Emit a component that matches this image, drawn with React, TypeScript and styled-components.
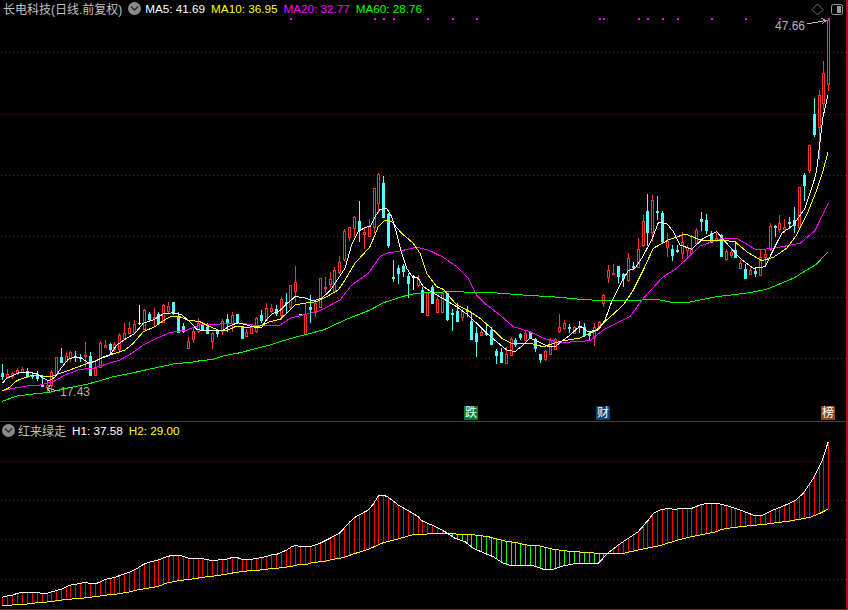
import React from "react";
import styled, { createGlobalStyle } from "styled-components";

type Kind = "r" | "c" | "w";
type Row = [number, number, number, number, number, Kind];
type Pt = [number, number];

const Global = createGlobalStyle`
  html, body { margin: 0; padding: 0; background: #000; }
  #root { width: 848px; height: 610px; }
`;

const Screen = styled.div`
  width: 848px;
  height: 610px;
  box-sizing: border-box;
  background: #000;
  border-right: 2px solid #b00c0c;
  border-bottom: 1px solid #b00c0c;
  display: flex;
  flex-direction: column;
  overflow: hidden;
  font-family: "Liberation Sans", "Noto Sans CJK SC", sans-serif;
  font-size: 12px;
`;
const MainPane = styled.section`
  position: relative;
  height: 422px;
  flex: none;
  box-sizing: border-box;
  border-bottom: 1px solid #b00c0c;
`;
const IndicatorPane = styled.section`
  position: relative;
  flex: 1;
  min-height: 0;
`;
const ChartSvg = styled.svg`
  display: block;
  width: 846px;
  height: 100%;
`;
const Legend = styled.div<{ $left: number; $top: number }>`
  position: absolute;
  left: ${(p) => p.$left}px;
  top: ${(p) => p.$top}px;
  display: flex;
  align-items: center;
  gap: 6px;
  height: 17px;
  white-space: nowrap;
`;
const Title = styled.span`
  color: #c0c0c0;
`;
const Value = styled.span<{ $color: string }>`
  color: ${(p) => p.$color};
  font-size: 11.7px;
`;
const MenuDot = styled.span<{ $trail: number }>`
  width: 13px;
  height: 13px;
  margin-right: ${(p) => p.$trail}px;
  border-radius: 50%;
  background: #8a8a8a;
  display: inline-flex;
  align-items: center;
  justify-content: center;
  flex: none;
`;
const Tools = styled.div`
  position: absolute;
  right: 3px;
  top: 3px;
  display: flex;
  align-items: center;
  gap: 7px;
`;
const PriceTag = styled.span<{ $x: number; $y: number }>`
  position: absolute;
  left: ${(p) => p.$x}px;
  top: ${(p) => p.$y}px;
  color: #b4b4b4;
  line-height: 14px;
`;
const Badge = styled.span<{ $x: number; $bg: string }>`
  position: absolute;
  left: ${(p) => p.$x}px;
  top: 406px;
  width: 14px;
  height: 14px;
  line-height: 14px;
  text-align: center;
  color: #fff;
  background: ${(p) => p.$bg};
`;

const at = (dx: number, dy: number, rows: Row[]): Row[] =>
  rows.map(([x, h, t, b, l, k]) => [Math.floor(dx + x / 3), dy + h / 3, dy + t / 3, dy + b / 3, dy + l / 3, k]);
const pts = (dx: number, dy: number, list: Pt[]): Pt[] => list.map(([x, y]) => [dx + x / 3, dy + y / 3]);

const candles: Row[] = [
  ...at(0, 290, [
    [7,222,250,258,270,"c"],[22,238,252,262,268,"r"],[37,245,250,258,268,"r"],[52,235,240,248,255,"r"],[67,232,238,246,250,"r"],
    [82,235,242,258,265,"c"],[97,250,255,258,268,"c"],[112,242,252,265,272,"c"],[127,258,283,287,290,"c"],[142,270,285,290,305,"r"],
    [154,240,245,285,305,"r"],[169,200,202,252,255,"r"],[184,175,202,216,220,"c"],[199,185,198,212,215,"r"],[211,183,186,205,215,"r"],
    [226,183,198,202,215,"c"],[241,192,200,203,215,"c"],[256,157,196,198,230,"r"],[271,185,198,255,258,"c"],[286,217,233,255,255,"r"],
    [301,152,160,232,235,"r"],[316,150,165,170,172,"r"],[331,158,162,178,190,"c"],[343,155,163,178,185,"r"],[358,128,135,178,190,"r"],
    [373,98,130,145,150,"r"],[388,95,115,130,132,"r"],[403,90,102,125,132,"r"],[418,45,100,102,105,"w"],[433,58,60,118,120,"r"],
    [448,65,72,88,92,"c"],[463,55,80,85,110,"r"],[475,65,72,100,105,"c"],[490,42,45,95,98,"r"],[505,36,48,62,70,"r"],
    [520,36,36,70,75,"c"],[535,65,82,125,128,"c"],[550,98,108,122,128,"c"],[565,142,153,175,178,"r"],[580,112,124,148,160,"r"],
    [595,85,100,124,128,"r"],[607,95,105,118,122,"c"],[622,100,112,130,132,"c"],[637,125,130,152,178,"r"],[652,118,124,128,140,"c"],
    [667,88,92,124,136,"r"],[682,72,88,98,125,"c"],[697,65,75,98,125,"r"],[712,72,72,100,102,"c"],[727,108,112,145,148,"c"],
    [740,118,125,137,140,"r"],[755,105,112,130,130,"r"],[770,82,85,122,130,"r"],[785,60,75,90,100,"c"],[800,40,55,90,92,"r"],
    [815,42,55,62,70,"r"],[830,45,58,70,78,"c"],
  ]),
  ...at(280, 170, [
    [3,382,388,435,450,"r"],[18,368,395,400,430,"c"],[32,345,345,412,420,"r"],[47,288,336,362,395,"r"],[60,432,432,434,434,"w"],
    [76,400,432,492,495,"r"],[91,375,412,416,460,"c"],[107,395,398,426,440,"r"],[121,325,325,410,412,"r"],[136,322,350,352,368,"r"],
    [151,305,328,342,355,"r"],[163,292,300,362,365,"r"],[178,258,276,306,312,"r"],[193,178,184,268,272,"r"],[208,170,172,200,212,"r"],
    [223,138,140,175,200,"r"],[238,93,153,180,215,"c"],[253,175,186,192,238,"r"],[268,148,168,198,200,"r"],[283,55,55,172,190,"r"],
    [295,10,12,98,130,"r"],[310,18,40,140,140,"c"],[325,130,133,225,235,"c"],[340,270,320,322,335,"c"],[355,285,294,308,342,"c"],
    [370,282,288,302,320,"c"],[385,310,318,338,385,"c"],[400,315,320,322,360,"w"],[415,315,328,345,352,"r"],[428,352,360,425,430,"c"],
    [443,368,368,434,436,"r"],[458,345,350,398,400,"c"],[473,385,388,425,426,"r"],[488,370,370,425,426,"r"],[503,368,370,446,452,"c"],
    [518,418,428,430,482,"c"],[533,398,424,452,454,"c"],[547,418,424,440,452,"r"],[562,408,420,424,440,"c"],[575,428,452,506,508,"c"],
    [590,470,490,512,560,"c"],[605,472,486,494,496,"r"],[620,465,488,492,498,"c"],[635,470,480,522,525,"c"],[650,538,542,556,582,"c"],
    [665,535,546,575,576,"c"],[680,530,552,578,580,"r"],[695,502,508,556,558,"r"],[707,505,510,522,530,"c"],[722,488,492,502,510,"c"],
    [737,484,490,510,512,"r"],[752,485,487,502,504,"c"],[767,505,508,535,545,"c"],[782,552,552,568,578,"c"],[797,540,544,566,572,"r"],
    [812,505,510,552,554,"r"],[827,505,508,536,540,"r"],[838,432,470,484,490,"r"],
  ]),
  ...at(560, 170, [
    [13,450,458,474,480,"r"],[28,462,470,474,490,"c"],[43,468,470,490,492,"r"],[58,452,468,470,490,"c"],[73,458,470,496,502,"c"],
    [88,484,490,494,510,"c"],[103,458,470,500,528,"r"],[118,452,456,470,475,"r"],[130,372,374,400,412,"r"],[145,285,300,320,340,"r"],
    [160,282,308,312,316,"r"],[175,288,288,318,338,"c"],[190,310,312,325,350,"c"],[205,250,264,330,335,"r"],[220,275,288,290,300,"c"],
    [235,205,236,290,295,"r"],[250,135,154,226,230,"r"],[262,72,124,186,228,"c"],[277,75,90,186,215,"r"],[292,78,122,126,150,"c"],
    [307,122,128,214,222,"c"],[322,190,214,232,260,"r"],[337,225,238,256,272,"c"],[352,225,240,244,250,"c"],[367,185,216,248,268,"r"],
    [382,225,232,240,268,"r"],[395,195,236,248,250,"r"],[410,175,180,218,222,"r"],[425,126,148,152,182,"c"],[440,132,150,180,192,"c"],
    [455,182,190,216,220,"c"],[470,184,204,210,215,"r"],[485,192,196,258,260,"c"],[500,238,242,268,272,"r"],[515,238,246,256,265,"r"],
    [527,218,240,260,262,"c"],[542,270,280,294,298,"r"],[557,282,296,324,324,"c"],[572,294,300,312,316,"r"],[587,292,304,308,320,"c"],
    [602,240,262,314,316,"r"],[617,240,252,260,292,"r"],[632,160,168,238,242,"r"],[647,165,168,170,202,"c"],[658,135,160,178,190,"r"],
    [673,148,172,178,190,"r"],[688,142,156,158,178,"c"],[703,112,150,164,188,"c"],[718,52,52,172,178,"r"],[733,10,16,46,92,"c"],
  ]),
  [809,145,145,170,173,"r"],[814,98,114,134,137,"c"],[819,90,95,127,160,"r"],[823,61,73,103,110,"r"],[828,20,20,84,91,"r"],
];

const ma5: Pt[] = [
  ...pts(0,290,[[7,280],[20,265],[35,258],[60,247],[85,248],[110,250],[130,265],[145,272],[165,262],[185,232],[205,208],[225,200],[245,205],[265,218],[285,215],[305,205],[330,195],[350,165],[380,145],[405,130],[430,100],[460,90],[490,72],[520,68],[545,75],[570,95],[590,118],[610,122],[640,122],[670,120],[695,105],[715,98],[740,105],[765,112],[785,112],[800,88],[815,72],[840,62]]),
  ...pts(280,170,[[20,402],[45,380],[70,382],[100,392],[125,385],[150,362],[175,325],[195,295],[215,225],[235,185],[255,172],[270,170],[285,140],[300,118],[320,115],[335,140],[350,190],[365,250],[380,295],[395,318],[415,325],[430,350],[470,375],[500,392],[530,410],[560,432],[590,460],[620,490],[650,515],[680,540],[705,545],[730,525],[750,505],[775,515],[800,528],[825,530]]),
  ...pts(560,170,[[0,518],[30,495],[60,468],[85,485],[115,480],[135,450],[155,395],[185,335],[205,302],[225,295],[245,265],[275,210],[295,158],[320,160],[340,185],[360,225],[395,238],[430,205],[470,185],[500,220],[540,265],[580,295],[615,290],[640,240],[665,190],[700,165],[735,115],[760,40],[770,0]]),
  [819,150],[823,117],[828,95],
];
const ma10: Pt[] = [
  ...pts(0,290,[[7,302],[25,295],[50,272],[70,265],[100,255],[130,258],[160,258],[185,248],[215,238],[250,225],[280,215],[310,200],[345,190],[375,180],[400,160],[430,125],[465,110],[490,92],[515,78],[540,80],[560,90],[600,95],[630,110],[655,120],[680,122],[710,108],[740,112],[780,108],[810,95],[840,88]]),
  ...pts(280,170,[[20,430],[45,405],[70,400],[110,395],[140,380],[175,360],[195,330],[225,280],[270,230],[295,170],[315,150],[335,155],[365,190],[400,220],[420,250],[440,310],[470,350],[490,358],[530,405],[570,425],[600,445],[640,480],[665,505],[700,522],[750,520],[790,530]]),
  ...pts(560,170,[[0,514],[60,504],[110,480],[140,450],[190,405],[220,360],[250,300],[280,235],[325,210],[375,192],[430,213],[480,210],[525,215],[560,245],[605,272],[640,262],[680,235],[710,195],[740,135],[770,60],[790,0]]),
  [828,152],
];
const ma20: Pt[] = [
  ...pts(0,290,[[7,302],[40,295],[80,288],[120,285],[160,275],[195,255],[240,238],[280,235],[320,222],[360,210],[395,190],[430,165],[470,145],[510,128],[560,120],[600,105],[660,102],[700,100],[740,102],[780,108],[840,105]]),
  ...pts(280,170,[[30,445],[70,435],[120,422],[180,390],[215,345],[265,310],[300,260],[320,250],[360,243],[410,232],[445,240],[490,262],[530,290],[565,325],[590,375],[620,405],[660,435],[700,470],[750,485],[790,505]]),
  ...pts(560,170,[[0,518],[90,512],[130,480],[210,440],[250,385],[310,320],[350,295],[420,228],[480,207],[530,205],[590,240],[640,235],[720,220],[765,182],[805,100]]),
];
const ma60: Pt[] = [
  ...pts(0,290,[[7,334],[50,318],[100,312],[150,307],[200,295],[260,283],[300,272],[340,260],[400,248],[460,235],[530,220],[570,218],[600,212],[640,208],[670,198],[720,188],[770,175],[810,165],[840,155]]),
  ...pts(280,170,[[60,498],[130,480],[200,448],[270,420],[310,398],[390,373],[440,368],[510,365],[640,368],[730,375],[840,382]]),
  ...pts(560,170,[[60,388],[130,392],[250,390],[290,388],[335,397],[385,397],[470,380],[570,368],[620,358],[700,325],[770,282],[803,246]]),
];

const h1: Pt[] = [
  ...pts(0,415,[[7,547],[22,543],[37,541],[52,535],[67,532],[112,532],[127,536],[142,535],[157,530],[172,526],[187,522],[202,514],[217,509],[232,507],[247,504],[257,502],[272,506],[287,506],[302,500],[317,493],[332,490],[347,487],[362,480],[377,475],[392,470],[407,463],[422,453],[437,445],[452,440],[467,437],[482,432],[497,426],[512,422],[527,421],[542,422],[557,427],[572,432],[587,431],[602,430],[617,433],[632,436],[647,436],[662,434],[677,433],[695,428],[710,427],[725,433],[755,433],[770,430],[785,428],[800,424],[815,419],[830,418],[845,412],[860,405],[875,395],[890,391]]),
  ...pts(300,480,[[0,200],[30,200],[60,190],[90,175],[120,158],[150,125],[165,112],[205,90],[220,72],[235,48],[250,45],[265,52],[295,75],[325,92],[355,110],[365,122],[395,135],[425,150],[440,158],[465,175],[495,185],[520,205],[550,218],[580,230],[610,250],[630,256],[700,257],[730,268],[760,268],[790,258],[830,250],[895,250]]),
  ...pts(600,430,[[0,395],[20,372],[55,345],[85,325],[115,305],[145,270],[160,250],[185,238],[205,236],[225,238],[250,235],[275,235],[300,225],[320,220],[350,220],[385,228],[420,240],[465,257],[490,255],[520,240],[545,230],[585,212],[610,190],[640,145],[665,95],[685,35]]),
];
const h2: Pt[] = [
  ...pts(0,415,[[7,572],[37,570],[52,568],[82,567],[112,563],[142,561],[172,557],[202,553],[232,551],[262,548],[292,544],[322,540],[352,537],[382,532],[412,525],[442,520],[472,515],[500,504],[530,498],[560,494],[590,490],[620,485],[650,482],[680,477],[710,472],[740,468],[780,465],[810,461],[850,458],[880,453]]),
  ...pts(300,480,[[0,253],[20,253],[40,247],[70,245],[100,238],[130,233],[160,222],[205,208],[250,188],[290,178],[335,165],[395,161],[440,160],[460,160],[470,163],[510,163],[565,170],[610,182],[650,188],[680,195],[715,197],[760,208],[800,213],[840,216],[895,220]]),
  ...pts(600,430,[[20,370],[70,370],[115,360],[175,348],[235,330],[265,322],[300,315],[350,305],[365,298],[405,292],[440,288],[495,283],[530,278],[565,274],[630,262],[660,250],[685,237]]),
];

const yAt = (line: Pt[], x: number): number => {
  for (let i = 1; i < line.length; i++) {
    if (x <= line[i][0]) {
      const [x0, y0] = line[i - 1];
      const [x1, y1] = line[i];
      return y0 + ((y1 - y0) * (x - x0)) / (x1 - x0 || 1);
    }
  }
  return line[line.length - 1][1];
};
const toPath = (line: Pt[]) => line.map(([x, y]) => `${x.toFixed(1)},${y.toFixed(1)}`).join(" ");

const KIND: Record<Kind, string> = { r: "#ff3232", c: "#54fcfc", w: "#ffffff" };
const mainGrid = [52, 114, 175, 236, 297, 358];
const lowerGrid = [461, 500, 539, 579];
const marks = [290, 374, 383, 393, 427, 452, 476, 599, 603, 638, 647, 662, 677, 711, 745, 779, 828];

const Candle: React.FC<{ row: Row }> = ({ row: [x, h, t, b, l, k] }) => {
  const color = KIND[k];
  const cx = x + 0.5;
  const top = Math.round(t);
  const bot = Math.round(b);
  return (
    <g stroke={color}>
      <line x1={cx} x2={cx} y1={h} y2={top} />
      <line x1={cx} x2={cx} y1={bot} y2={l} />
      {k === "w" ? (
        <line x1={x - 1} x2={x + 2} y1={top + 0.5} y2={top + 0.5} />
      ) : (
        <rect x={x - 0.5} y={top + 0.5} width={2} height={Math.max(bot - top, 1)} fill={k === "r" ? "#000" : color} />
      )}
    </g>
  );
};

const Chevron = () => (
  <svg width="9" height="7" viewBox="0 0 9 7">
    <path d="M1 1.5 L4.5 5 L8 1.5" fill="none" stroke="#2a2a2a" strokeWidth="1.4" />
  </svg>
);

const GridLines: React.FC<{ ys: number[] }> = ({ ys }) => (
  <g stroke="#a00a0a" strokeDasharray="1 3">
    {ys.map((y) => (
      <line key={y} x1={1} x2={846} y1={y + 0.5} y2={y + 0.5} />
    ))}
  </g>
);

export default function App() {
  return (
    <Screen>
      <Global />
      <MainPane>
        <ChartSvg viewBox="0 0 846 421" shapeRendering="crispEdges">
          <GridLines ys={mainGrid} />
          {marks.map((x) => (
            <rect key={x} x={x} y={18} width={2} height={2} fill="#ff00ff" />
          ))}
          {candles.map((row, i) => (
            <Candle key={i} row={row} />
          ))}
          <polyline points={toPath(ma60)} fill="none" stroke="#00ff00" />
          <polyline points={toPath(ma20)} fill="none" stroke="#ff00ff" />
          <polyline points={toPath(ma10)} fill="none" stroke="#ffff00" />
          <polyline points={toPath(ma5)} fill="none" stroke="#ffffff" />
          <g fill="none" stroke="#b4b4b4">
            <path d="M807 24 L826 20.5 M821 18 L826 20.5 L822 24" />
            <path d="M58 391 L47 388 M51 385 L47 388 L50 392" />
          </g>
        </ChartSvg>
        <Legend $left={3} $top={0}>
          <Title>长电科技(日线.前复权)</Title>
          <MenuDot $trail={-2}><Chevron /></MenuDot>
          <Value $color="#ffffff">MA5: 41.69</Value>
          <Value $color="#ffff00">MA10: 36.95</Value>
          <Value $color="#ff00ff">MA20: 32.77</Value>
          <Value $color="#00ff00">MA60: 28.76</Value>
        </Legend>
        <Tools>
          <svg width="13" height="13" viewBox="0 0 13 13">
            <path d="M6.5 1 L12 6.5 L6.5 12 L1 6.5 Z" fill="none" stroke="#777" />
          </svg>
          <svg width="12" height="11" viewBox="0 0 12 11">
            <rect x="0.5" y="0.5" width="11" height="10" rx="2" fill="none" stroke="#999" />
            <rect x="6" y="2" width="4" height="7" fill="#999" />
          </svg>
        </Tools>
        <PriceTag $x={775} $y={19}>47.66</PriceTag>
        <PriceTag $x={60} $y={385}>17.43</PriceTag>
        <Badge $x={464} $bg="#0a7a2c">跌</Badge>
        <Badge $x={596} $bg="#103c72">财</Badge>
        <Badge $x={821} $bg="#8a4a12">榜</Badge>
      </MainPane>
      <IndicatorPane>
        <ChartSvg viewBox="0 422 846 187" shapeRendering="crispEdges">
          <GridLines ys={lowerGrid} />
          {candles.map(([x], i) => {
            const cx = x + 0.5;
            const y1 = yAt(h1, cx);
            const y2 = yAt(h2, cx);
            return <line key={i} x1={cx} x2={cx} y1={y1} y2={y2} stroke={y1 < y2 ? "#ff0000" : "#00ff00"} />;
          })}
          <polyline points={toPath(h2)} fill="none" stroke="#ffff00" />
          <polyline points={toPath(h1)} fill="none" stroke="#ffffff" />
        </ChartSvg>
        <Legend $left={2} $top={0}>
          <MenuDot $trail={-3}><Chevron /></MenuDot>
          <Title>红来绿走</Title>
          <Value $color="#ffffff">H1: 37.58</Value>
          <Value $color="#ffff00">H2: 29.00</Value>
        </Legend>
      </IndicatorPane>
    </Screen>
  );
}
